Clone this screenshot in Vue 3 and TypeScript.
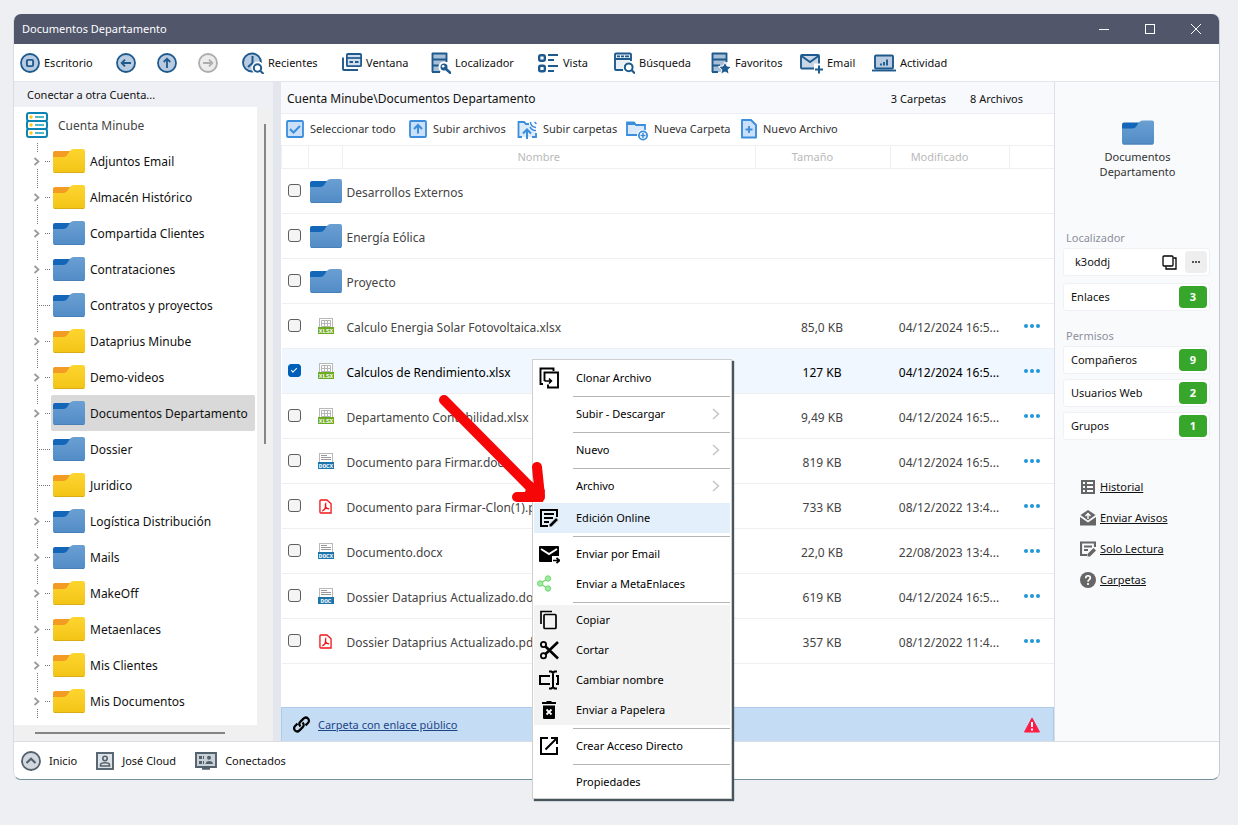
<script setup lang="ts">
import { ref } from 'vue'

interface Tool { icon: string; label: string; w: number; hint?: string }
interface Folder { name: string; color: 'yellow' | 'blue'; leaf?: boolean; selected?: boolean }
interface Entry { name: string; kind: string; size?: string; date?: string; checked?: boolean }
interface MenuItem { label: string; icon?: string; sub?: boolean; active?: boolean; shaded?: boolean; line?: boolean }

const icons: Record<string, string> = {
  desktop: '<circle cx="10" cy="11" r="9" fill="#b9cbe0" stroke="#1f5a8e" stroke-width="1.8"/><rect x="6.9" y="7.9" width="6.2" height="6.2" rx="1" fill="#c9d8e8" stroke="#1f5a8e" stroke-width="1.9"/>',
  back: '<circle cx="10" cy="11" r="9" fill="#b9cbe0" stroke="#1f5a8e" stroke-width="1.8"/><path d="M15 11H6M9 7.700L5.700 11 9 14.300" fill="none" stroke="#1f5a8e" stroke-width="1.8"/>',
  up: '<circle cx="10" cy="11" r="9" fill="#b9cbe0" stroke="#1f5a8e" stroke-width="1.8"/><path d="M10 16V7M6.700 10L10 6.700 13.300 10" fill="none" stroke="#1f5a8e" stroke-width="1.8"/>',
  next: '<circle cx="10" cy="11" r="9" fill="#ececec" stroke="#adadad" stroke-width="1.8"/><path d="M5 11h9M11 7.700L14.300 11 11 14.300" fill="none" stroke="#adadad" stroke-width="1.8"/>',
  recent: '<circle cx="10" cy="10.500" r="9" fill="#b9cbe0" stroke="#1f5a8e" stroke-width="1.9"/><path d="M10.500 4V11L6 15" fill="none" stroke="#1f5a8e" stroke-width="2"/><circle cx="16" cy="16" r="6.500" fill="#fff"/><circle cx="15.500" cy="16" r="3.700" fill="#fff" stroke="#1f5a8e" stroke-width="2"/><path d="M18.200 18.700L21.500 22" stroke="#1f5a8e" stroke-width="2"/>',
  window: '<rect x="4.900" y="2" width="14.200" height="12.200" rx="1" fill="#d2deeb" stroke="#1f5a8e" stroke-width="1.8"/><path d="M4.500 6h15" stroke="#1f5a8e" stroke-width="1.700"/><path d="M7.500 10h3.500M13 10h3.500" stroke="#1f5a8e" stroke-width="2"/><path d="M1 5.500V17a1 1 0 0 0 1 1h14" fill="none" stroke="#1f5a8e" stroke-width="1.900"/>',
  locate: '<path d="M1.500 1h14v19h-14z" fill="#a9bfd8"/><path d="M1 1.500h15M1 7.500h15M1 13.500h9M1 20h8M1.500 1v19M15.500 1v9" fill="none" stroke="#1f5a8e" stroke-width="1.900"/><circle cx="13" cy="15" r="5.500" fill="#fff"/><circle cx="13" cy="15" r="3.500" fill="#1f5a8e"/><circle cx="12.200" cy="14.200" r="1.300" fill="#fff"/><path d="M15 17l5 4.500" stroke="#1f5a8e" stroke-width="2.600"/>',
  view: '<rect x="1.200" y="3.200" width="5.600" height="5.600" rx="1.500" fill="#fff" stroke="#1f5a8e" stroke-width="2.400"/><rect x="1.200" y="13.700" width="5.600" height="5.600" rx="1.500" fill="#fff" stroke="#1f5a8e" stroke-width="2.400"/><path d="M10 3h10M10 8h6M10 14h10M10 19h6" stroke="#1f5a8e" stroke-width="2"/>',
  search: '<path d="M1 2h16v17H1z" fill="#e9eff5"/><path d="M9 18H2a1 1 0 0 1-1-1V2.500a1 1 0 0 1 1-1h14a1 1 0 0 1 1 1V9M1 7h16" fill="none" stroke="#1f5a8e" stroke-width="1.900"/><path d="M3 4.300h3M7 4.300h3M11 4.300h4" stroke="#1f5a8e" stroke-width="1.800"/><circle cx="15" cy="15.500" r="6" fill="#fff"/><circle cx="14.700" cy="15.300" r="3.900" fill="#fff" stroke="#1f5a8e" stroke-width="2"/><path d="M17.500 18l3.500 3.500" stroke="#1f5a8e" stroke-width="2.200"/>',
  star: '<path d="M1.500 1h14v19h-14z" fill="#a9bfd8"/><path d="M1 1.500h15M1 7.500h15M1 13.500h8M1 20h6M1.500 1v19M15.500 1v9" fill="none" stroke="#1f5a8e" stroke-width="1.900"/><path d="M14 10l2 4 4.500.500-3.300 3.100 1 4.600-4.200-2.200-4.200 2.200 1-4.600-3.300-3.100L12 14z" fill="#1f5a8e" stroke="#fff" stroke-width="1"/>',
  mail: '<rect x="1" y="3" width="18" height="13.500" rx="1" fill="#c8d6e6" stroke="#1f5a8e" stroke-width="1.900"/><path d="M1.500 4l8.500 6 8.500-6" fill="none" stroke="#1f5a8e" stroke-width="1.900"/><path d="M14 11.500h10V23H14z" fill="#fff"/><path d="M19 13.500v8M15 17.500h8" stroke="#1f5a8e" stroke-width="2"/>',
  activity: '<rect x="3" y="3.500" width="18" height="13" rx="1" fill="#b9cbe0" stroke="#1f5a8e" stroke-width="1.900"/><path d="M0 18.500h24" stroke="#1f5a8e" stroke-width="1.900"/><path d="M9 13.500v-2M12 13.500V10M15 13.500V7.500" stroke="#1f5a8e" stroke-width="1.900"/>',
  server: '<path d="M2 1h18v24H2z" fill="#eaf6fb"/><rect x="1" y="1" width="20" height="8" rx="2" fill="#fff" stroke="#0c84b4" stroke-width="2"/><rect x="1" y="9" width="20" height="8" rx="2" fill="#fff" stroke="#0c84b4" stroke-width="2"/><rect x="1" y="17" width="20" height="8" rx="2" fill="#fff" stroke="#0c84b4" stroke-width="2"/><path d="M9 5h9M9 13h9M9 21h9" stroke="#13a3b5" stroke-width="1.600"/><circle cx="5" cy="5" r="1.700" fill="#fbc918"/><circle cx="5" cy="13" r="1.700" fill="#fbc918"/><circle cx="5" cy="21" r="1.700" fill="#fbc918"/>',
  selectAll: '<rect x="1" y="2" width="16" height="16" rx="1" fill="#c9e0f8" stroke="#3b8ddd" stroke-width="1.800"/><path d="M4 10l3.500 3.500L14 7" fill="none" stroke="#3b8ddd" stroke-width="2"/>',
  uploadFile: '<rect x="1" y="2" width="16" height="16" rx="1" fill="#c9e0f8" stroke="#3b8ddd" stroke-width="1.800"/><path d="M9 14.500V7M5 10l4-4 4 4" fill="none" stroke="#3b8ddd" stroke-width="2"/>',
  uploadFolder: '<path d="M1 3h6l2 2h3l7 8v5H1z" fill="#dcebfa"/><path d="M5 18H1.500V3H7l2 2h3M15 18h4v-4" fill="none" stroke="#3b8ddd" stroke-width="1.800"/><path d="M10 20V12M6 14.500l4-4 4 4" fill="none" stroke="#3b8ddd" stroke-width="2"/><path d="M13.500 3c0 3 2 5 5.500 5.500M17.500 3l2 2M13 8c1 2 3 3.500 6 3.500" fill="none" stroke="#3b8ddd" stroke-width="1.500"/>',
  newFolder: '<path d="M1 16V3.500h7l2 2.500h9v10z" fill="#d9e9fa" stroke="#3b8ddd" stroke-width="1.800"/><path d="M1 3h7l2 3H1z" fill="#3b8ddd"/><circle cx="17" cy="16.500" r="6" fill="#fff"/><circle cx="17" cy="16.500" r="4.100" fill="#fff" stroke="#3b8ddd" stroke-width="1.800"/><path d="M17 14v5M14.500 16.500h5" stroke="#3b8ddd" stroke-width="1.500"/>',
  newFile: '<path d="M1 1h9l5 5v12.500H1z" fill="#c9e0f8" stroke="#3b8ddd" stroke-width="1.900" stroke-linejoin="round"/><path d="M8 7v7M4.500 10.500h7" stroke="#3b8ddd" stroke-width="1.800"/>',
  clone: '<path d="M4 16H1.500V0.500h13V3M5.500 13V4.500h13.500V19.500H9V16.500" fill="none" stroke="#000" stroke-width="1.900"/><path d="M5.500 13h7M10 10.500l2.500 2.500-2.500 2.500" fill="none" stroke="#000" stroke-width="1.500"/>',
  edit: '<path d="M9 18H2V2h16v7M5 6h10M5 10h9M5 14h5" fill="none" stroke="#000" stroke-width="2"/><path d="M10 19v-2.500l7-7 2.500 2.500-7 7z" fill="#000" stroke="#e5f0fc" stroke-width="1"/>',
  sendMail: '<path d="M1 2h18a1 1 0 0 1 1 1v9h-7v6H1a1 1 0 0 1-1-1V3a1 1 0 0 1 1-1z"/><path d="M2 5l8 5 8-5" fill="none" stroke="#fff" stroke-width="2"/><path d="M14 16.500h6M17.500 14l3 2.500-3 2.500" fill="none" stroke="#000" stroke-width="1.700"/>',
  share: '<path d="M11 4.500L3 9.500l8 5" fill="none" stroke="#76c976" stroke-width="1.200"/><circle cx="11" cy="4.500" r="2.700" fill="#a5e8a5" stroke="#67dd67"/><circle cx="3.200" cy="9.500" r="2.700" fill="#a5e8a5" stroke="#67dd67"/><circle cx="11" cy="14.500" r="2.700" fill="#a5e8a5" stroke="#67dd67"/>',
  copy: '<path d="M2 14V1.500h11" fill="none" stroke="#000" stroke-width="1.700"/><rect x="5" y="4.500" width="12" height="14" rx="1" fill="none" stroke="#000" stroke-width="1.700"/>',
  cut: '<path d="M6 6l13 12.500M6 14.500L19 2" stroke="#000" stroke-width="2.600"/><circle cx="4.500" cy="4.500" r="2.600" fill="none" stroke="#000" stroke-width="1.800"/><circle cx="4.500" cy="15.800" r="2.600" fill="none" stroke="#000" stroke-width="1.800"/>',
  rename: '<path d="M11 6H1v8h10M17 6h2v8h-2M14 2v16M10 1.500h2.500L14 3l1.500-1.500H18M10 18.500h2.500L14 17l1.500 1.500H18" fill="none" stroke="#000" stroke-width="2"/>',
  trash: '<path d="M3 2h4l1-1h4l1 1h4v2H3zM4 5.500h12V18a1 1 0 0 1-1 1H5a1 1 0 0 1-1-1z"/><path d="M7.500 9.500l5 5M12.500 9.500l-5 5" stroke="#fff" stroke-width="1.800"/>',
  shortcut: '<path d="M9 2H2v16h16v-7M12 2h6v6M6.500 13.500L18 2" fill="none" stroke="#000" stroke-width="2"/>',
  history: '<path d="M1 1h14v14H1z" fill="#666"/><path d="M3 3h2v2H3zM3 7h2v2H3zM3 11h2v2H3zM7 3h6v2H7zM7 7h6v2H7zM7 11h6v2H7z" fill="#fff"/>',
  notice: '<path d="M8 0l7.500 5L8 10.500 .500 5z" fill="#666"/><path d="M0 7l8 5.500L16 7v8.500H0z" fill="#666"/><path d="M8 9V4M5.500 6L8 3.500 10.500 6" fill="none" stroke="#fff" stroke-width="1.400"/>',
  readonly: '<path d="M7 14H1V1.500h14V6M4 5.500h8M4 9h4" fill="none" stroke="#666" stroke-width="2.200"/><path d="M7.500 15.500v-2.500l6-6 2.500 2.500-6 6z" fill="#666"/>',
  help: '<circle cx="8" cy="8" r="8" fill="#666"/><path d="M5.700 6.200c0-3.200 4.600-3.200 4.600-.300 0 1.900-2.300 1.700-2.300 3.800M8 11v2" fill="none" stroke="#fff" stroke-width="1.700"/>',
  home: '<circle cx="10" cy="10" r="9" fill="#d2d8de" stroke="#52616e" stroke-width="1.800"/><path d="M5.500 12L10 7.700l4.500 4.300" fill="none" stroke="#52616e" stroke-width="2.200"/>',
  user: '<rect x="1" y="2" width="16" height="16" fill="#dde2e6" stroke="#52616e" stroke-width="1.900"/><circle cx="9" cy="7.500" r="2.200" fill="none" stroke="#52616e" stroke-width="1.600"/><path d="M4.500 15v-1c0-3 9-3 9 0v1z" fill="none" stroke="#52616e" stroke-width="1.600"/>',
  online: '<path d="M1 2h20v14H1z" fill="#c9d0d6" stroke="#52616e" stroke-width="1.900"/><path d="M7 17.500h8" stroke="#52616e" stroke-width="2.500"/><path d="M4 5h3v3H4zM4 10h3v3H4zM8 5h1v3H8zM8 10h1v3H8z" fill="#52616e"/><circle cx="14" cy="6.800" r="2" fill="#52616e"/><path d="M10.500 13c0-4 7.500-4 7.500 0z" fill="#52616e"/>',
  link: '<path d="M7.500 10.500c-1.600-1.600-1.600-3.300 0-4.900l3-3c3-3 7.400 1.400 4.400 4.400l-2.400 2.400M9.500 6.500c1.600 1.600 1.600 3.300 0 4.900l-3 3c-3 3-7.400-1.400-4.400-4.400l2.400-2.400" fill="none" stroke="#000" stroke-width="2.200"/>',
  alert: '<path d="M8 1L15.500 15H.500z" fill="#fc1c45" stroke="#fc1c45" stroke-linejoin="round"/><path d="M8 5v5M8 11.500v2" stroke="#fff" stroke-width="2"/>',
  squares: '<path d="M11.500 3H14v11H4v-2.500" fill="none" stroke="#000" stroke-width="1.300"/><rect x="1" y="1" width="10" height="10" rx="1" fill="#fff" stroke="#000" stroke-width="1.300"/>',
  pdf: '<path d="M2 1h6.500L13 5v10H2a1 1 0 0 1-1-1V2a1 1 0 0 1 1-1z" fill="#fff" stroke="#f01418" stroke-width="1.400"/><path d="M4 12.500c2-.500 3.500-4 3.200-7.500C6 7 8 10.500 10.800 10.500 8 9.500 5 10.500 4 12.500z" fill="none" stroke="#f01418" stroke-width="1.300"/>',
}

const tools: Tool[] = [
  { icon: 'desktop', label: 'Escritorio', w: 20 },
  { icon: 'back', label: '', w: 20, hint: 'Atrás' },
  { icon: 'up', label: '', w: 20, hint: 'Subir' },
  { icon: 'next', label: '', w: 20, hint: 'Adelante' },
  { icon: 'recent', label: 'Recientes', w: 22 },
  { icon: 'window', label: 'Ventana', w: 20 },
  { icon: 'locate', label: 'Localizador', w: 20 },
  { icon: 'view', label: 'Vista', w: 21 },
  { icon: 'search', label: 'Búsqueda', w: 21 },
  { icon: 'star', label: 'Favoritos', w: 20 },
  { icon: 'mail', label: 'Email', w: 23 },
  { icon: 'activity', label: 'Actividad', w: 24 },
]

const actions: Tool[] = [
  { icon: 'selectAll', label: 'Seleccionar todo', w: 18 },
  { icon: 'uploadFile', label: 'Subir archivos', w: 18 },
  { icon: 'uploadFolder', label: 'Subir carpetas', w: 20 },
  { icon: 'newFolder', label: 'Nueva Carpeta', w: 22 },
  { icon: 'newFile', label: 'Nuevo Archivo', w: 16 },
]

const folders: Folder[] = [
  { name: 'Adjuntos Email', color: 'yellow' },
  { name: 'Almacén Histórico', color: 'yellow' },
  { name: 'Compartida Clientes', color: 'blue' },
  { name: 'Contrataciones', color: 'blue' },
  { name: 'Contratos y proyectos', color: 'blue', leaf: true },
  { name: 'Dataprius Minube', color: 'yellow' },
  { name: 'Demo-videos', color: 'yellow' },
  { name: 'Documentos Departamento', color: 'blue', selected: true },
  { name: 'Dossier', color: 'blue', leaf: true },
  { name: 'Juridico', color: 'yellow', leaf: true },
  { name: 'Logística Distribución', color: 'blue' },
  { name: 'Mails', color: 'blue' },
  { name: 'MakeOff', color: 'yellow' },
  { name: 'Metaenlaces', color: 'yellow' },
  { name: 'Mis Clientes', color: 'yellow' },
  { name: 'Mis Documentos', color: 'yellow' },
]

const entries = ref<Entry[]>([
  { name: 'Desarrollos Externos', kind: 'folder' },
  { name: 'Energía Eólica', kind: 'folder' },
  { name: 'Proyecto', kind: 'folder' },
  { name: 'Calculo Energia Solar Fotovoltaica.xlsx', kind: 'XLSX', size: '85,0 KB', date: '04/12/2024 16:5...' },
  { name: 'Calculos de Rendimiento.xlsx', kind: 'XLSX', size: '127 KB', date: '04/12/2024 16:5...', checked: true },
  { name: 'Departamento Contabilidad.xlsx', kind: 'XLSX', size: '9,49 KB', date: '04/12/2024 16:5...' },
  { name: 'Documento para Firmar.docx', kind: 'DOCX', size: '819 KB', date: '04/12/2024 16:5...' },
  { name: 'Documento para Firmar-Clon(1).pdf', kind: 'pdf', size: '733 KB', date: '08/12/2022 13:4...' },
  { name: 'Documento.docx', kind: 'DOCX', size: '22,0 KB', date: '22/08/2023 13:4...' },
  { name: 'Dossier Dataprius Actualizado.doc', kind: 'DOC', size: '619 KB', date: '04/12/2024 16:5...' },
  { name: 'Dossier Dataprius Actualizado.pdf', kind: 'pdf', size: '357 KB', date: '08/12/2022 11:4...' },
])

const menu: MenuItem[] = [
  { label: 'Clonar Archivo', icon: 'clone', line: true },
  { label: 'Subir - Descargar', sub: true, line: true },
  { label: 'Nuevo', sub: true, line: true },
  { label: 'Archivo', sub: true },
  { label: 'Edición Online', icon: 'edit', active: true, line: true },
  { label: 'Enviar por Email', icon: 'sendMail' },
  { label: 'Enviar a MetaEnlaces', icon: 'share', line: true },
  { label: 'Copiar', icon: 'copy', shaded: true },
  { label: 'Cortar', icon: 'cut', shaded: true },
  { label: 'Cambiar nombre', icon: 'rename', shaded: true },
  { label: 'Enviar a Papelera', icon: 'trash', shaded: true, line: true },
  { label: 'Crear Acceso Directo', icon: 'shortcut', line: true },
  { label: 'Propiedades' },
]

const permissions = [
  { label: 'Compañeros', count: 9 },
  { label: 'Usuarios Web', count: 2 },
  { label: 'Grupos', count: 1 },
]
const links = [
  { label: 'Historial', icon: 'history' },
  { label: 'Enviar Avisos', icon: 'notice' },
  { label: 'Solo Lectura', icon: 'readonly' },
  { label: 'Carpetas', icon: 'help' },
]
const status: Tool[] = [
  { icon: 'home', label: 'Inicio', w: 20 },
  { icon: 'user', label: 'José Cloud', w: 18 },
  { icon: 'online', label: 'Conectados', w: 22 },
]
</script>

<template>
  <div class="desktop">
    <svg class="defs" width="0" height="0" aria-hidden="true">
      <defs>
        <linearGradient id="g-yellow" x1="0" y1="0" x2="0" y2="1"><stop offset="0" stop-color="#fdd52f" /><stop offset="1" stop-color="#f3c417" /></linearGradient>
        <linearGradient id="g-blue" x1="0" y1="0" x2="0" y2="1"><stop offset="0" stop-color="#6a9fd2" /><stop offset="1" stop-color="#528cc6" /></linearGradient>
        <symbol id="folder-yellow" viewBox="0 0 32 24"><path d="M0 4a2 2 0 0 1 2-2h18v8H0z" fill="#f39b23" /><path d="M0 8h10c3 0 4-1.500 5.500-4S18.500 0 21 0h9a2 2 0 0 1 2 2v20a2 2 0 0 1-2 2H2a2 2 0 0 1-2-2z" fill="url(#g-yellow)" /><path d="M1 23.500h30" stroke="#d9ab14" /></symbol>
        <symbol id="folder-blue" viewBox="0 0 32 24"><path d="M0 4a2 2 0 0 1 2-2h18v8H0z" fill="#1467b8" /><path d="M0 8h10c3 0 4-1.500 5.500-4S18.500 0 21 0h9a2 2 0 0 1 2 2v20a2 2 0 0 1-2 2H2a2 2 0 0 1-2-2z" fill="url(#g-blue)" /><path d="M1 23.500h30" stroke="#4a80b8" /></symbol>
      </defs>
    </svg>

    <div class="window">
      <header class="titlebar">
        <span>Documentos Departamento</span>
        <div class="controls">
          <button type="button" aria-label="Minimizar"><svg width="10" height="10"><path d="M0 5.500h10" stroke="#fff" /></svg></button>
          <button type="button" aria-label="Maximizar"><svg width="10" height="10"><rect x=".5" y=".5" width="9" height="9" fill="none" stroke="#fff" /></svg></button>
          <button type="button" aria-label="Cerrar"><svg width="10" height="10"><path d="M0 0l10 10M10 0L0 10" stroke="#fff" /></svg></button>
        </div>
      </header>

      <nav class="tools">
        <button v-for="t in tools" :key="t.icon" type="button" :aria-label="t.hint || t.label">
          <svg :width="t.w" height="22" :viewBox="`0 0 ${t.w} 22`" v-html="icons[t.icon]" />
          <span v-if="t.label">{{ t.label }}</span>
        </button>
      </nav>

      <div class="body">
        <aside class="sidebar">
          <button type="button" class="connect">Conectar a otra Cuenta...</button>
          <div class="tree-area">
            <div class="tree">
              <button type="button" class="root">
                <svg width="22" height="26" viewBox="0 0 22 26" v-html="icons.server" />
                <span>Cuenta Minube</span>
              </button>
              <div v-for="f in folders" :key="f.name" class="node">
                <svg class="branch" width="21" height="36" viewBox="0 0 21 36">
                  <path :d="f.leaf ? 'M7.500 0V36M9 18.500H21' : 'M7.500 0V9M7.500 26V36M15 18.500H21'" fill="none" stroke="#777" stroke-dasharray="1 1" />
                  <path v-if="!f.leaf" d="M4.500 15l4 3.500-4 3.500" fill="none" stroke="#999" stroke-width="1.700" />
                </svg>
                <button type="button" :class="{ selected: f.selected }">
                  <svg width="32" height="24"><use :href="`#folder-${f.color}`" /></svg>
                  <span>{{ f.name }}</span>
                </button>
              </div>
            </div>
            <div class="vbar"><i></i></div>
            <div class="hbar"><i></i></div>
          </div>
        </aside>

        <div class="splitter"></div>

        <main>
          <div class="path">
            <span class="where">Cuenta Minube\Documentos Departamento</span>
            <span>3 Carpetas</span>
            <span>8 Archivos</span>
          </div>
          <div class="actions">
            <button v-for="a in actions" :key="a.icon" type="button">
              <svg :width="a.w" height="22" :viewBox="`0 0 ${a.w} 22`" v-html="icons[a.icon]" />
              <span>{{ a.label }}</span>
            </button>
          </div>
          <table>
            <colgroup><col class="c-check" /><col class="c-icon" /><col /><col class="c-size" /><col class="c-date" /><col class="c-more" /></colgroup>
            <thead>
              <tr><th></th><th></th><th>Nombre</th><th>Tamaño</th><th>Modificado</th><th></th></tr>
            </thead>
            <tbody>
              <tr v-for="e in entries" :key="e.name" :class="{ checked: e.checked }">
                <td class="check"><input v-model="e.checked" type="checkbox" :aria-label="e.name" /></td>
                <td class="icon">
                  <svg v-if="e.kind === 'folder'" width="32" height="24"><use href="#folder-blue" /></svg>
                  <svg v-else-if="e.kind === 'pdf'" width="13" height="15" viewBox="0 0 14 16" v-html="icons.pdf" />
                  <svg v-else width="16" height="17" viewBox="0 0 16 17">
                    <rect x="1.500" y=".5" width="13" height="12" fill="#fff" stroke="#b9b9b9" />
                    <path v-if="e.kind === 'XLSX'" d="M3.500 2.500h9v6h-9zM3.500 5.500h9M6.500 2.500v6M9.500 2.500v6" fill="none" stroke="#b5b5b5" />
                    <path v-else d="M3 2.500h6M3 4.500h10M3 6.500h10" stroke="#999" />
                    <path d="M0 9h16v7H0z" :fill="e.kind === 'XLSX' ? '#6cab1f' : '#1c74ab'" />
                    <text x="8" y="15" class="ext">{{ e.kind }}</text>
                  </svg>
                </td>
                <td class="name">{{ e.name }}</td>
                <td class="num">{{ e.size }}</td>
                <td class="num">{{ e.date }}</td>
                <td class="more">
                  <button v-if="e.size" type="button" aria-label="Más"><svg width="16" height="4"><circle cx="2" cy="2" r="2" /><circle cx="8" cy="2" r="2" /><circle cx="14" cy="2" r="2" /></svg></button>
                </td>
              </tr>
            </tbody>
          </table>
          <div class="public">
            <svg width="17" height="17" viewBox="0 0 17 17" v-html="icons.link" />
            <a href="#">Carpeta con enlace público</a>
            <svg class="alert" width="16" height="16" viewBox="0 0 16 16" v-html="icons.alert" />
          </div>
        </main>

        <aside class="info">
          <div class="current">
            <svg width="32" height="25"><use href="#folder-blue" /></svg>
            <span>Documentos</span>
            <span>Departamento</span>
          </div>
          <h2>Localizador</h2>
          <div class="card code">
            <span>k3oddj</span>
            <button type="button" class="copy" aria-label="Copiar"><svg width="15" height="15" viewBox="0 0 15 15" v-html="icons.squares" /></button>
            <button type="button" class="dots" aria-label="Opciones"><svg width="8" height="2"><path d="M0 1h2M3 1h2M6 1h2" stroke="#555" stroke-width="2" /></svg></button>
          </div>
          <div class="card links-card"><span>Enlaces</span><b>3</b></div>
          <h2>Permisos</h2>
          <div v-for="p in permissions" :key="p.label" class="card"><span>{{ p.label }}</span><b>{{ p.count }}</b></div>
          <ul>
            <li v-for="l in links" :key="l.label">
              <svg width="16" height="16" viewBox="0 0 16 16" v-html="icons[l.icon]" />
              <a href="#">{{ l.label }}</a>
            </li>
          </ul>
        </aside>
      </div>

      <footer>
        <button v-for="s in status" :key="s.icon" type="button">
          <svg :width="s.w" height="20" :viewBox="`0 0 ${s.w} 20`" v-html="icons[s.icon]" />
          <span>{{ s.label }}</span>
        </button>
      </footer>

      <div class="menu" role="menu">
        <template v-for="m in menu" :key="m.label">
          <button type="button" role="menuitem" :class="{ active: m.active, shaded: m.shaded }">
            <span class="glyph" :class="{ left: m.icon === 'share' }"><svg v-if="m.icon" width="21" height="22" viewBox="0 -1 21 22" v-html="icons[m.icon]" /></span>
            <span class="label">{{ m.label }}</span>
            <svg v-if="m.sub" width="8" height="12"><path d="M1 1l5.500 5L1 11" fill="none" stroke="#c6c6c6" stroke-width="1.500" /></svg>
          </button>
          <div v-if="m.line" class="line"></div>
        </template>
      </div>

      <svg class="pointer" width="112" height="114" viewBox="0 0 112 114" aria-hidden="true">
        <path d="M8 8L104 105M101 75L104 104M81 105L104 105" fill="none" stroke="#f60606" stroke-width="10" stroke-linecap="round" />
        <path d="M93 88l16 10-2 12-20-4z" fill="#f60606" />
      </svg>
    </div>
  </div>
</template>

<style>
body { margin: 0; background: #edeff3; }
</style>

<style scoped>
.desktop {
  box-sizing: border-box;
  min-height: 100vh;
  padding: 14px 18px 45px 13px;
  display: flex;
  font: 11px/16px "Noto Sans", "Open Sans", sans-serif;
  color: #111;
}
.defs { position: absolute; }
svg { flex: none; display: block; }
button {
  border: 0;
  padding: 0;
  background: none;
  font: inherit;
  color: inherit;
  display: flex;
  align-items: center;
  white-space: nowrap;
  text-align: left;
}
.window {
  position: relative;
  flex: 1;
  min-width: 0;
  display: flex;
  flex-direction: column;
  background: #fff;
  border: 1px solid #c3ccd4;
  border-top: 0;
  border-left-color: #d8dde3;
  border-bottom-color: #74929d;
  border-radius: 8px;
}
.titlebar {
  height: 30px;
  display: flex;
  align-items: center;
  justify-content: space-between;
  padding: 0 18px 0 8px;
  background: #51566b;
  color: #fff;
  border-radius: 7px 7px 0 0;
}
.controls { display: flex; gap: 36px; }
.tools {
  height: 37px;
  border-bottom: 1px solid #e3e6ec;
  padding-left: 6px;
  display: grid;
  grid-template-columns: 96px 41px 41px 44px 100px 89px 107px 76px 97px 89px 72px auto;
  align-items: center;
}
.tools button { gap: 4px; }
.body {
  flex: 1;
  display: grid;
  grid-template-columns: 259px 8px minmax(0, 1fr) 165px;
}
.sidebar { display: flex; flex-direction: column; min-width: 0; }
.connect { height: 25px; padding-left: 13px; background: #eff0f5; }
.tree-area {
  flex: 1;
  display: grid;
  grid-template: 1fr 16px / 1fr 16px;
  background: #f0f0f0;
}
.tree { background: #fff; font-size: 12px; }
.tree span { padding-top: 2px; }
.root { height: 36px; gap: 10px; padding-left: 12px; color: #444; }
.node { display: flex; padding-left: 16px; }
.node button { height: 36px; gap: 5px; padding: 0 7px 0 2px; border-radius: 2px; }
.node .selected { background: #d9d9d9; }
.vbar { padding: 17px 0 0 7px; }
.vbar i { display: block; width: 2px; height: 320px; background: #858585; }
.hbar { padding: 7px 0 0 21px; }
.hbar i { display: block; width: 190px; height: 2px; background: #858585; }
.splitter { background: #e4e6ed; }
main { display: flex; flex-direction: column; min-width: 0; }
.path {
  height: 31px;
  display: flex;
  align-items: center;
  gap: 24px;
  padding: 0 31px 0 6px;
  background: #f8f9fc;
  border-bottom: 1px solid #edeef2;
}
.path span { padding-top: 2px; }
.where { flex: 1; font-size: 12px; }
.actions {
  height: 31px;
  display: grid;
  grid-template-columns: 123px 108px 109px 115px auto;
  align-items: center;
  padding-left: 5px;
  color: #333;
}
.actions button { gap: 6px; }
.actions span { padding-bottom: 2px; }
table { width: 100%; table-layout: fixed; border-collapse: collapse; font-size: 12px; }
.c-check { width: 27px; }
.c-icon { width: 34px; }
.c-size { width: 135px; }
.c-date { width: 119px; }
.c-more { width: 45px; }
th {
  height: 22px;
  padding: 0 20px 0 0;
  border: 1px solid #eeeff2;
  font-size: 11px;
  font-weight: 400;
  color: #b9b9b9;
}
th:first-child, th:last-child { padding: 0; border-right: 0; }
td { height: 45px; padding: 0; border-bottom: 1px solid #eeeff2; color: #444; white-space: nowrap; box-sizing: border-box; }
.checked td { background: #f0f7fe; color: #000; }
.icon svg { margin: 0 auto; }
.name { padding: 4px 0 0 4px; overflow: hidden; }
.num { padding: 4px 1px 0 0; text-align: center; }
.check input {
  appearance: none;
  display: block;
  width: 13px;
  height: 13px;
  margin: 0 0 2px 6px;
  border: 1px solid #5e5e5e;
  border-radius: 3px;
  background: #f4f4f4;
}
.check input:checked { background: #005fb8; border-color: #005fb8; }
.check input:checked::after {
  content: "";
  display: block;
  width: 5px;
  height: 2px;
  margin: 3px auto;
  border: solid #fff;
  border-width: 0 0 1px 1px;
  transform: rotate(-45deg);
}
.more button { margin: 0 auto; fill: #2196d9; }
.ext { font: bold 6px "Liberation Mono", monospace; fill: #fff; text-anchor: middle; }
.public {
  margin-top: auto;
  height: 33px;
  display: flex;
  align-items: center;
  gap: 8px;
  padding: 0 13px 0 11px;
  background: #c5ddf4;
  border: 1px solid #aecbe8;
  border-bottom: 0;
}
.public a { color: #1c4587; }
.alert { margin-left: auto; }
.info { border-left: 1px solid #dcdfe8; background: #f9fafc; padding: 38px 9px 0 8px; }
.current { display: flex; flex-direction: column; align-items: center; line-height: 15px; color: #333; padding: 0 0 51px 2px; }
.current svg { margin-bottom: 4px; }
.info h2 { margin: 0; padding: 0 3px 2px; font-size: 11px; line-height: 16px; font-weight: 400; color: #8b909d; }
.card {
  box-sizing: border-box;
  height: 28px;
  margin-bottom: 5px;
  display: flex;
  align-items: center;
  padding: 0 2px 0 7px;
  background: #fff;
  border: 1px solid #f0f1f5;
  border-radius: 3px;
}
.card span { flex: 1; }
.card b { width: 28px; line-height: 22px; text-align: center; background: #37a72b; color: #fff; border-radius: 4px; }
.code { margin-bottom: 7px; padding-left: 11px; }
.copy { margin-right: 8px; }
.dots { width: 22px; height: 22px; justify-content: center; background: #eee; border-radius: 4px; }
.links-card { margin-bottom: 17px; }
.info ul { list-style: none; margin: 0; padding: 26px 0 0 17px; }
.info li { display: flex; align-items: center; gap: 4px; height: 31px; }
.info a { color: #111; }
footer {
  height: 37px;
  display: flex;
  align-items: center;
  gap: 19px;
  padding-left: 7px;
  border-top: 1px solid #d9dde2;
}
footer button { gap: 8px; }
.menu {
  position: absolute;
  left: 518px;
  top: 345px;
  box-sizing: border-box;
  width: 200px;
  padding: 3px 1px 1px;
  background: #fff;
  border: 1px solid #cfcfcf;
  box-shadow: 2px 2px 1px #47555c;
  color: #000;
}
.menu button { width: 100%; height: 30px; padding-right: 10px; }
.menu .active { box-sizing: border-box; margin-top: 2px; background: #e3effb; }
.menu .shaded { background: #f3f3f3; }
.glyph { width: 37px; padding-left: 5px; }
.left { width: 39px; padding-left: 3px; }
.label { flex: 1; }
.line { height: 1px; margin: 3px 0 2px 39px; background: #b5b5b5; }
.pointer { position: absolute; left: 422px; top: 378px; pointer-events: none; }
</style>
